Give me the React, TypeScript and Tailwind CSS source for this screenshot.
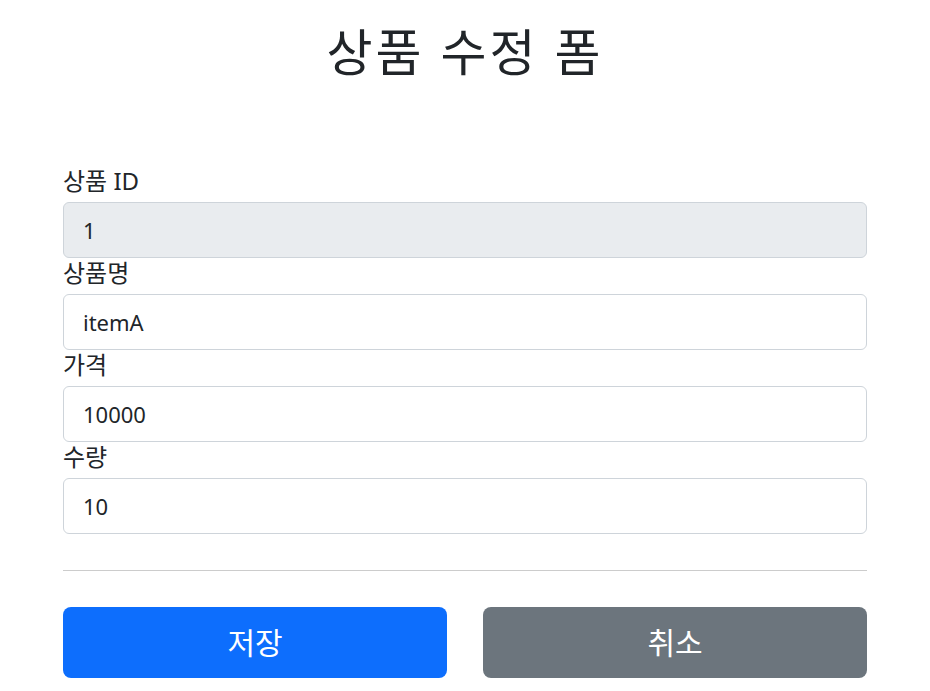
const FONT = "font-['Segoe_UI','Noto_Sans','Noto_Sans_CJK_KR',sans-serif]"

interface FieldProps {
  label: string
  value: string
  disabled?: boolean
}

function Field({ label, value, disabled }: FieldProps) {
  return (
    <div className="flex flex-col">
      <label className="block h-[30px] text-[24px] leading-[30px] text-[#212529] mb-[6px]">{label}</label>
      <input
        readOnly
        value={value}
        disabled={disabled}
        className={
          'block h-[56px] w-full rounded-[6px] border border-[#ced4da] px-[19px] text-[22px] text-[#212529] outline-none ' +
          (disabled ? 'bg-[#e9ecef]' : 'bg-white')
        }
      />
    </div>
  )
}

export default function App() {
  return (
    <div className={`${FONT} min-h-[691px] bg-white`}>
      <div className="mx-auto w-[804px]">
        <h2 className="h-[80px] pt-[24px] text-center text-[50px] leading-[56px] text-[#212529] tracking-[3px]">상품 수정 폼</h2>
        <form className="mt-[86px] flex flex-col">
          <Field label="상품 ID" value="1" disabled />
          <Field label="상품명" value="itemA" />
          <Field label="가격" value="10000" />
          <Field label="수량" value="10" />
        </form>
        <hr className="mt-[36px] border-0 border-t border-[#cccccc]" />
        <div className="mt-[36px] grid grid-cols-2 gap-[36px]">
          <button className="h-[71px] rounded-[8px] bg-[#0d6efd] text-[30px] text-white">저장</button>
          <button className="h-[71px] rounded-[8px] bg-[#6c757d] text-[30px] text-white">취소</button>
        </div>
      </div>
    </div>
  )
}
